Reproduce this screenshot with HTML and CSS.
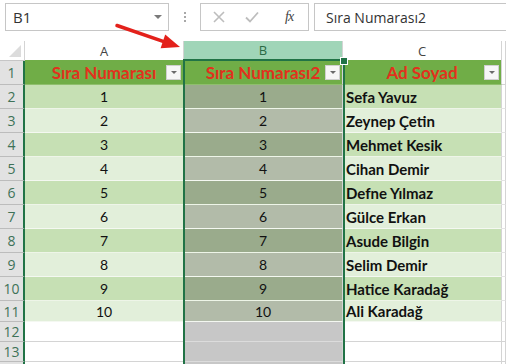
FILE: index.html
```html
<!DOCTYPE html>
<html lang="tr">
<head>
    <meta charset="UTF-8">
    <title>Sıra Numarası</title>
    <link rel="stylesheet" href="styles.css">
</head>
<body>
<div class="app">
    <div class="bar">
        <div class="namebox"><span>B1</span><span class="caret"></span></div>
        <div class="grip"><i></i><i></i><i></i></div>
        <div class="fbuttons">
            <svg class="ico" width="12" height="12" viewBox="0 0 12 12"><path d="M1 1 L11 11 M11 1 L1 11" stroke="#bdbdbd" stroke-width="1.6" fill="none"/></svg>
            <svg class="ico" width="14" height="12" viewBox="0 0 14 12"><path d="M1 6.5 L5 10.5 L13 1.5" stroke="#bdbdbd" stroke-width="1.8" fill="none"/></svg>
            <span class="fx">fx</span>
        </div>
        <div class="finput">Sıra Numarası2</div>
    </div>

    <div class="sheet">
        <div class="row colhead">
            <div class="corner"></div>
            <div class="ch">A</div>
            <div class="ch ch-sel">B</div>
            <div class="ch">C</div>
            <div class="ch"></div>
        </div>
        <div class="row r1">
            <div class="rh">1</div>
            <div class="c head">Sıra Numarası<span class="filter"></span></div>
            <div class="c head">Sıra Numarası2<span class="filter"></span></div>
            <div class="c head">Ad Soyad<span class="filter"></span></div>
            <div class="c"></div>
        </div>
        <div class="row band1">
            <div class="rh">2</div><div class="c num">1</div><div class="c num sel">1</div><div class="c name">Sefa Yavuz</div><div class="c"></div>
        </div>
        <div class="row band2">
            <div class="rh">3</div><div class="c num">2</div><div class="c num sel">2</div><div class="c name">Zeynep Çetin</div><div class="c"></div>
        </div>
        <div class="row band1">
            <div class="rh">4</div><div class="c num">3</div><div class="c num sel">3</div><div class="c name">Mehmet Kesik</div><div class="c"></div>
        </div>
        <div class="row band2">
            <div class="rh">5</div><div class="c num">4</div><div class="c num sel">4</div><div class="c name">Cihan Demir</div><div class="c"></div>
        </div>
        <div class="row band1">
            <div class="rh">6</div><div class="c num">5</div><div class="c num sel">5</div><div class="c name">Defne Yılmaz</div><div class="c"></div>
        </div>
        <div class="row band2">
            <div class="rh">7</div><div class="c num">6</div><div class="c num sel">6</div><div class="c name">Gülce Erkan</div><div class="c"></div>
        </div>
        <div class="row band1">
            <div class="rh">8</div><div class="c num">7</div><div class="c num sel">7</div><div class="c name">Asude Bilgin</div><div class="c"></div>
        </div>
        <div class="row band2">
            <div class="rh">9</div><div class="c num">8</div><div class="c num sel">8</div><div class="c name">Selim Demir</div><div class="c"></div>
        </div>
        <div class="row band1">
            <div class="rh">10</div><div class="c num">9</div><div class="c num sel">9</div><div class="c name">Hatice Karadağ</div><div class="c"></div>
        </div>
        <div class="row band2 short">
            <div class="rh">11</div><div class="c num">10</div><div class="c num sel">10</div><div class="c name">Ali Karadağ</div><div class="c"></div>
        </div>
        <div class="row empty shorter">
            <div class="rh">12</div><div class="c"></div><div class="c sel"></div><div class="c"></div><div class="c"></div>
        </div>
        <div class="row empty shorter">
            <div class="rh">13</div><div class="c"></div><div class="c sel"></div><div class="c"></div><div class="c"></div>
        </div>
        <div class="row empty shorter">
            <div class="rh"></div><div class="c"></div><div class="c sel"></div><div class="c"></div><div class="c"></div>
        </div>

        <div class="selection"><span class="handle"></span></div>
    </div>

    <svg class="arrow" width="200" height="60" viewBox="0 0 200 60">
        <line x1="117" y1="25.5" x2="166" y2="42.3" stroke="#e3211b" stroke-width="3.5" stroke-linecap="round"/>
        <polygon points="180,47 165.2,34.4 160.6,48.2" fill="#e3211b"/>
    </svg>
</div>
</body>
</html>
```

FILE: styles.css
```css
body {
    margin: 0;
    background: #fff;
}
.app {
    position: relative;
    width: 506px;
    height: 364px;
    overflow: hidden;
    font-family: "Open Sans", "Liberation Sans", sans-serif;
}

/* formula bar */
.bar {
    height: 41px;
    display: flex;
    align-items: flex-start;
    padding: 3px 0 0 5px;
    box-sizing: border-box;
}
.namebox {
    width: 164px;
    height: 28px;
    box-sizing: border-box;
    border: 1px solid #c6c6c6;
    display: flex;
    align-items: center;
    justify-content: space-between;
    padding: 0 6px 0 7px;
    font-size: 15px;
    color: #333;
}
.caret {
    width: 0;
    height: 0;
    border-left: 4px solid transparent;
    border-right: 4px solid transparent;
    border-top: 4px solid #7a7a7a;
}
.grip {
    width: 31px;
    height: 28px;
    display: flex;
    flex-direction: column;
    align-items: center;
    justify-content: center;
    gap: 2px;
}
.grip i {
    width: 2px;
    height: 2px;
    background: #a8a8a8;
}
.fbuttons {
    width: 109px;
    height: 28px;
    box-sizing: border-box;
    border: 1px solid #c6c6c6;
    display: flex;
    align-items: center;
    padding-left: 12px;
}
.fbuttons .ico:nth-child(2) {
    margin-left: 20px;
}
.fx {
    margin-left: 26px;
    font-family: "Liberation Serif", serif;
    font-style: italic;
    font-size: 14px;
    color: #444;
    letter-spacing: -1px;
}
.finput {
    flex: 1;
    margin-left: 5px;
    height: 28px;
    box-sizing: border-box;
    border: 1px solid #c6c6c6;
    border-right: none;
    display: flex;
    align-items: center;
    padding-left: 11px;
    font-size: 14px;
    color: #333;
}

/* grid */
.sheet {
    position: relative;
}
.row {
    display: grid;
    grid-template-columns: 25px 159px 159px 159px 1fr;
    height: 24px;
}
.row > div {
    box-sizing: border-box;
}
.colhead { height: 19px; }
.r1 { height: 25px; }
.short { height: 21px; }
.shorter { height: 20px; }

.corner {
    position: relative;
    border-right: 1px solid #d4d4d4;
    border-bottom: 1px solid #c6c6c6;
}
.corner::after {
    content: "";
    position: absolute;
    right: 3px;
    bottom: 3px;
    border-left: 12px solid transparent;
    border-bottom: 12px solid #dcdcdc;
}
.ch {
    display: flex;
    align-items: center;
    justify-content: center;
    font-size: 13px;
    color: #444;
    border-right: 1px solid #d4d4d4;
    border-bottom: 1px solid #c6c6c6;
}
.ch-sel {
    background: #a0d5b8;
    color: #2b6a45;
    border-bottom: 2px solid #217346;
}

.rh {
    display: flex;
    align-items: center;
    justify-content: center;
    background: #e2e2e2;
    border-right: 2px solid #217346;
    border-bottom: 1px solid #bcbcbc;
    font-size: 14px;
    color: #3e7258;
}

.c {
    display: flex;
    align-items: center;
    font-family: Lato, "Liberation Sans", sans-serif;
    font-size: 14px;
    color: #111;
    border-right: 1px solid #d4d4d4;
    border-bottom: 1px solid #d4d4d4;
}
.head {
    position: relative;
    justify-content: center;
    background: #70ad47;
    color: #e2311d;
    font-weight: bold;
    font-size: 17px;
    border-bottom-color: #8fbf6d;
}
.r1 .c:last-child {
    background: #fff;
}
.filter {
    position: absolute;
    right: 2px;
    top: 5px;
    width: 15px;
    height: 15px;
    box-sizing: border-box;
    background: #f6f6f6;
    border: 1px solid #cfcfcf;
}
.filter::after {
    content: "";
    position: absolute;
    left: 4px;
    top: 5px;
    border-left: 3px solid transparent;
    border-right: 3px solid transparent;
    border-top: 3px solid #6a6a6a;
}
.num {
    justify-content: center;
}
.name {
    padding-left: 3px;
    font-weight: bold;
    font-size: 15px;
}
.band1 .c { background: #c6e0b4; border-bottom-color: #eef5e8; }
.band2 .c { background: #e2efda; border-bottom-color: #f4f8f1; }
.band1 .c:last-child,
.band2 .c:last-child { background: #fff; border-bottom-color: #e4e4e4; }
.band1 .sel { background: #9aab8c; }
.band2 .sel { background: #b2bba9; }
.empty .sel { background: #c7c7c7; border-bottom-color: #dcdcdc; }

/* column selection */
.selection {
    position: absolute;
    left: 183px;
    top: 18px;
    width: 162px;
    bottom: 0;
    box-sizing: border-box;
    border: 2px solid #217346;
    border-bottom: none;
}
.handle {
    position: absolute;
    right: -5px;
    top: -4px;
    width: 6px;
    height: 6px;
    background: #217346;
    border: 1px solid #fff;
}

.arrow {
    position: absolute;
    left: 0;
    top: 0;
}
```
